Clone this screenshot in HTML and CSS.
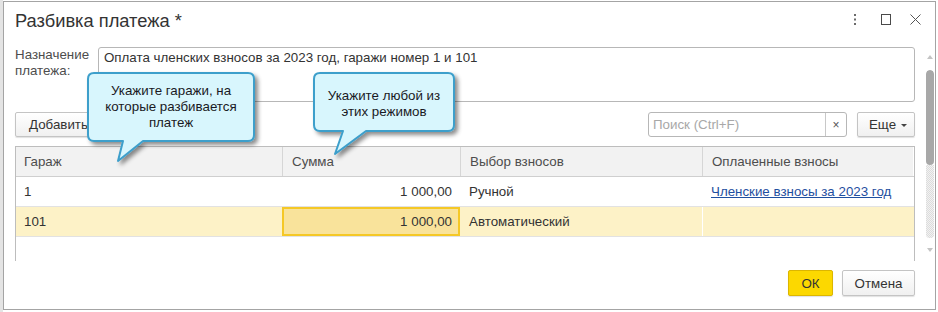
FILE: index.html
```html
<!DOCTYPE html>
<html lang="ru">
<head>
<meta charset="utf-8">
<title>Разбивка платежа</title>
<link rel="stylesheet" href="styles.css">
</head>
<body>
<div class="backdrop">
  <div class="dialog">
    <div class="header">
      <div class="title">Разбивка платежа *</div>
      <div class="win-icons">
        <svg class="ico" width="10" height="12" viewBox="0 0 10 12"><rect x="4" y="1" width="2" height="2" fill="#6b6b6b"/><rect x="4" y="5.5" width="2" height="2" fill="#6b6b6b"/><rect x="4" y="10" width="2" height="2" fill="#6b6b6b"/></svg>
        <svg class="ico sq" width="10" height="11" viewBox="0 0 10 11"><rect x="0.5" y="0.5" width="9" height="10" fill="none" stroke="#4a4a4a" stroke-width="1"/></svg>
        <svg class="ico x" width="11" height="11" viewBox="0 0 11 11"><path d="M0.5 0.5 L10.5 10.5 M10.5 0.5 L0.5 10.5" stroke="#555" stroke-width="1" fill="none"/></svg>
      </div>
    </div>

    <div class="body">
      <div class="content">
        <div class="field-row">
          <div class="label">Назначение<br>платежа:</div>
          <div class="textarea">Оплата членских взносов за 2023 год, гаражи номер 1 и 101</div>
        </div>

        <div class="toolbar">
          <div class="btn add">Добавить</div>
          <div class="spacer"></div>
          <div class="search">
            <span class="placeholder">Поиск (Ctrl+F)</span>
            <span class="clear">×</span>
          </div>
          <div class="btn more">Еще <span class="caret"></span></div>
        </div>

        <div class="table">
          <div class="row head">
            <div class="cell">Гараж</div>
            <div class="cell">Сумма</div>
            <div class="cell">Выбор взносов</div>
            <div class="cell">Оплаченные взносы</div>
          </div>
          <div class="row">
            <div class="cell">1</div>
            <div class="cell num">1 000,00</div>
            <div class="cell">Ручной</div>
            <div class="cell"><a class="link">Членские взносы за 2023 год</a></div>
          </div>
          <div class="row current">
            <div class="cell">101</div>
            <div class="cell num selected">1 000,00</div>
            <div class="cell">Автоматический</div>
            <div class="cell"></div>
          </div>
        </div>
      </div>

      <div class="scrollbar">
        <div class="arrow up"></div>
        <div class="track">
          <div class="thumb"></div>
          <div class="rest"></div>
        </div>
        <div class="arrow down"></div>
      </div>
    </div>

    <div class="footer">
      <div class="btn ok">ОК</div>
      <div class="btn cancel">Отмена</div>
    </div>

    <div class="bubble b1">
      <svg class="shape" width="168" height="92" viewBox="0 0 168 92">
        <defs>
          <filter id="sh1" x="-10%" y="-10%" width="130%" height="140%">
            <feDropShadow dx="3" dy="3" stdDeviation="2" flood-color="#000" flood-opacity="0.45"/>
          </filter>
        </defs>
        <path d="M7 1 H161 Q167 1 167 7 V63 Q167 69 161 69 H56 L31 89 L36 69 H7 Q1 69 1 63 V7 Q1 1 7 1 Z" fill="#d8f6fd" stroke="#3d9fcb" stroke-width="2" stroke-linejoin="round" filter="url(#sh1)"/>
      </svg>
      <div class="btext t1">Укажите гаражи, на<br>которые разбивается<br>платеж</div>
    </div>

    <div class="bubble b2">
      <svg class="shape" width="142" height="84" viewBox="0 0 142 84">
        <defs>
          <filter id="sh2" x="-10%" y="-10%" width="130%" height="140%">
            <feDropShadow dx="3" dy="3" stdDeviation="2" flood-color="#000" flood-opacity="0.45"/>
          </filter>
        </defs>
        <path d="M7 1 H135 Q141 1 141 7 V53 Q141 59 135 59 H53 L22 82 L30 59 H7 Q1 59 1 53 V7 Q1 1 7 1 Z" fill="#d8f6fd" stroke="#3d9fcb" stroke-width="2" stroke-linejoin="round" filter="url(#sh2)"/>
      </svg>
      <div class="btext t2">Укажите любой из<br>этих режимов</div>
    </div>
  </div>
</div>
</body>
</html>
```

FILE: styles.css
```css
* { box-sizing: border-box; }

html, body {
  margin: 0;
  padding: 0;
  background: #ffffff;
}

body {
  width: 938px;
  height: 312px;
  overflow: hidden;
  font-family: "Liberation Sans", Arial, sans-serif;
  font-size: 13.33px;
  color: #333;
}

.backdrop {
  padding: 1px 0 0 3px;
  background: linear-gradient(to right, #e4e4e4 0, #e4e4e4 3px, #ffffff 3px);
  height: 312px;
}

.dialog {
  position: relative;
  width: 933px;
  height: 309px;
  border: 1px solid #a4a4a4;
  background: #fff;
  display: flex;
  flex-direction: column;
}

/* header */
.header {
  height: 38px;
  display: flex;
  align-items: flex-start;
  padding: 8px 14px 0 11px;
}

.title {
  font-size: 18.3px;
  line-height: 22px;
  color: #333;
  flex: 1;
}

.win-icons {
  display: flex;
  align-items: center;
  height: 22px;
  margin-top: -2px;
}

.ico { display: block; }
.win-icons .ico:first-child { margin-right: 21px; }
.win-icons .sq { margin-right: 19px; }

/* body */
.body {
  height: 222px;
  display: flex;
}

.content {
  width: 911px;
  padding: 7px 0 0 11px;
  display: flex;
  flex-direction: column;
}

.field-row {
  display: flex;
  align-items: flex-start;
  height: 55px;
}

.label {
  width: 83px;
  line-height: 16px;
  color: #4d4d4d;
}

.textarea {
  flex: 1;
  height: 55px;
  border: 1px solid #b7b7b7;
  border-radius: 3px;
  padding: 2px 5px;
  line-height: 16px;
  color: #333;
}

.toolbar {
  margin-top: 10px;
  height: 25px;
  display: flex;
  align-items: stretch;
}

.spacer { flex: 1; }

.btn {
  display: flex;
  align-items: center;
  justify-content: center;
  border: 1px solid #c4c4c4;
  border-radius: 2px;
  background: linear-gradient(#ffffff, #f0f0f0);
  box-shadow: 0 1px 1px rgba(0, 0, 0, 0.12);
  color: #333;
}

.btn.add {
  width: 86px;
  padding: 0 0 0 13px;
  justify-content: flex-start;
}

.search {
  width: 199px;
  border: 1px solid #b7b7b7;
  border-radius: 3px;
  display: flex;
  align-items: center;
  margin-right: 10px;
}

.placeholder {
  flex: 1;
  padding-left: 4px;
  color: #a8a8a8;
}

.clear {
  width: 21px;
  height: 100%;
  border-left: 1px solid #c8c8c8;
  display: flex;
  align-items: center;
  justify-content: center;
  font-size: 12px;
  color: #555;
}

.btn.more {
  width: 58px;
  padding-left: 4px;
}

.caret {
  display: inline-block;
  width: 0;
  height: 0;
  margin-left: 5px;
  margin-top: 2px;
  border-left: 3px solid transparent;
  border-right: 3px solid transparent;
  border-top: 3px solid #444;
}

/* table */
.table {
  margin-top: 9px;
  height: 115px;
  border: 1px solid #bdbdbd;
  border-bottom: none;
}

.row {
  display: grid;
  grid-template-columns: 266px 178px 242px 1fr;
  height: 30px;
  border-bottom: 1px solid #e2e2e2;
}

.row.head {
  background: #f2f2f2;
  border-bottom: 1px solid #cfcfcf;
  color: #4d4d4d;
}

.row.head .cell + .cell { border-left: 1px solid #d6d6d6; }

.row.head .cell:last-child { border-right: 1px solid #fff; }

.cell {
  display: flex;
  align-items: center;
  padding: 0 8px;
  line-height: 16px;
  white-space: nowrap;
}

.row .cell + .cell { padding-left: 9px; }

.cell.num { justify-content: flex-end; padding-right: 8px; }

.row.current { background: #fdf2c7; }

.row.current .cell:last-child { border-left: 1px solid #fff; }

.cell.selected {
  background: #f9e39b;
  box-shadow: inset 0 0 0 2px #f5c826;
}

.link {
  color: #1f4fa0;
  text-decoration: underline;
}

/* scrollbar */
.scrollbar {
  margin-left: 10px;
  width: 9px;
  margin-right: 1px;
  display: flex;
  flex-direction: column;
  align-items: center;
  padding-top: 15px;
}

.arrow {
  width: 0;
  height: 0;
  border-left: 3px solid transparent;
  border-right: 3px solid transparent;
}

.arrow.up { border-bottom: 4px solid #c4c4c4; }
.arrow.down { border-top: 4px solid #c4c4c4; margin-top: 10px; }

.track {
  margin-top: 11px;
  width: 8px;
  height: 168px;
  display: flex;
  flex-direction: column;
  border-radius: 4px;
  overflow: hidden;
}

.thumb {
  height: 95px;
  background: #a8a8a8;
  border-radius: 4px;
}

.rest {
  flex: 1;
  background-color: #e9e9e9;
  background-image: repeating-conic-gradient(#dcdcdc 0 25%, #f2f2f2 0 50%);
  background-size: 2px 2px;
}

/* footer */
.footer {
  flex: 1;
  display: flex;
  justify-content: flex-end;
  align-items: flex-start;
  padding: 8px 20px 0 0;
  gap: 9px;
}

.footer .btn { height: 26px; }

.btn.ok {
  width: 45px;
  background: #fcd800;
  border-color: #dcb600;
  color: #333;
}

.btn.cancel {
  width: 73px;
}

/* bubbles */
.bubble {
  position: absolute;
}

.bubble .shape {
  position: absolute;
  left: 0;
  top: 0;
  overflow: visible;
}

.b1 { left: 83px; top: 70px; width: 168px; height: 70px; }
.b2 { left: 309px; top: 70px; width: 142px; height: 60px; }

.btext {
  position: relative;
  text-align: center;
  line-height: 16px;
  color: #1a1a24;
}

.t1 { padding-top: 11px; }
.t2 { padding-top: 16px; }
```
